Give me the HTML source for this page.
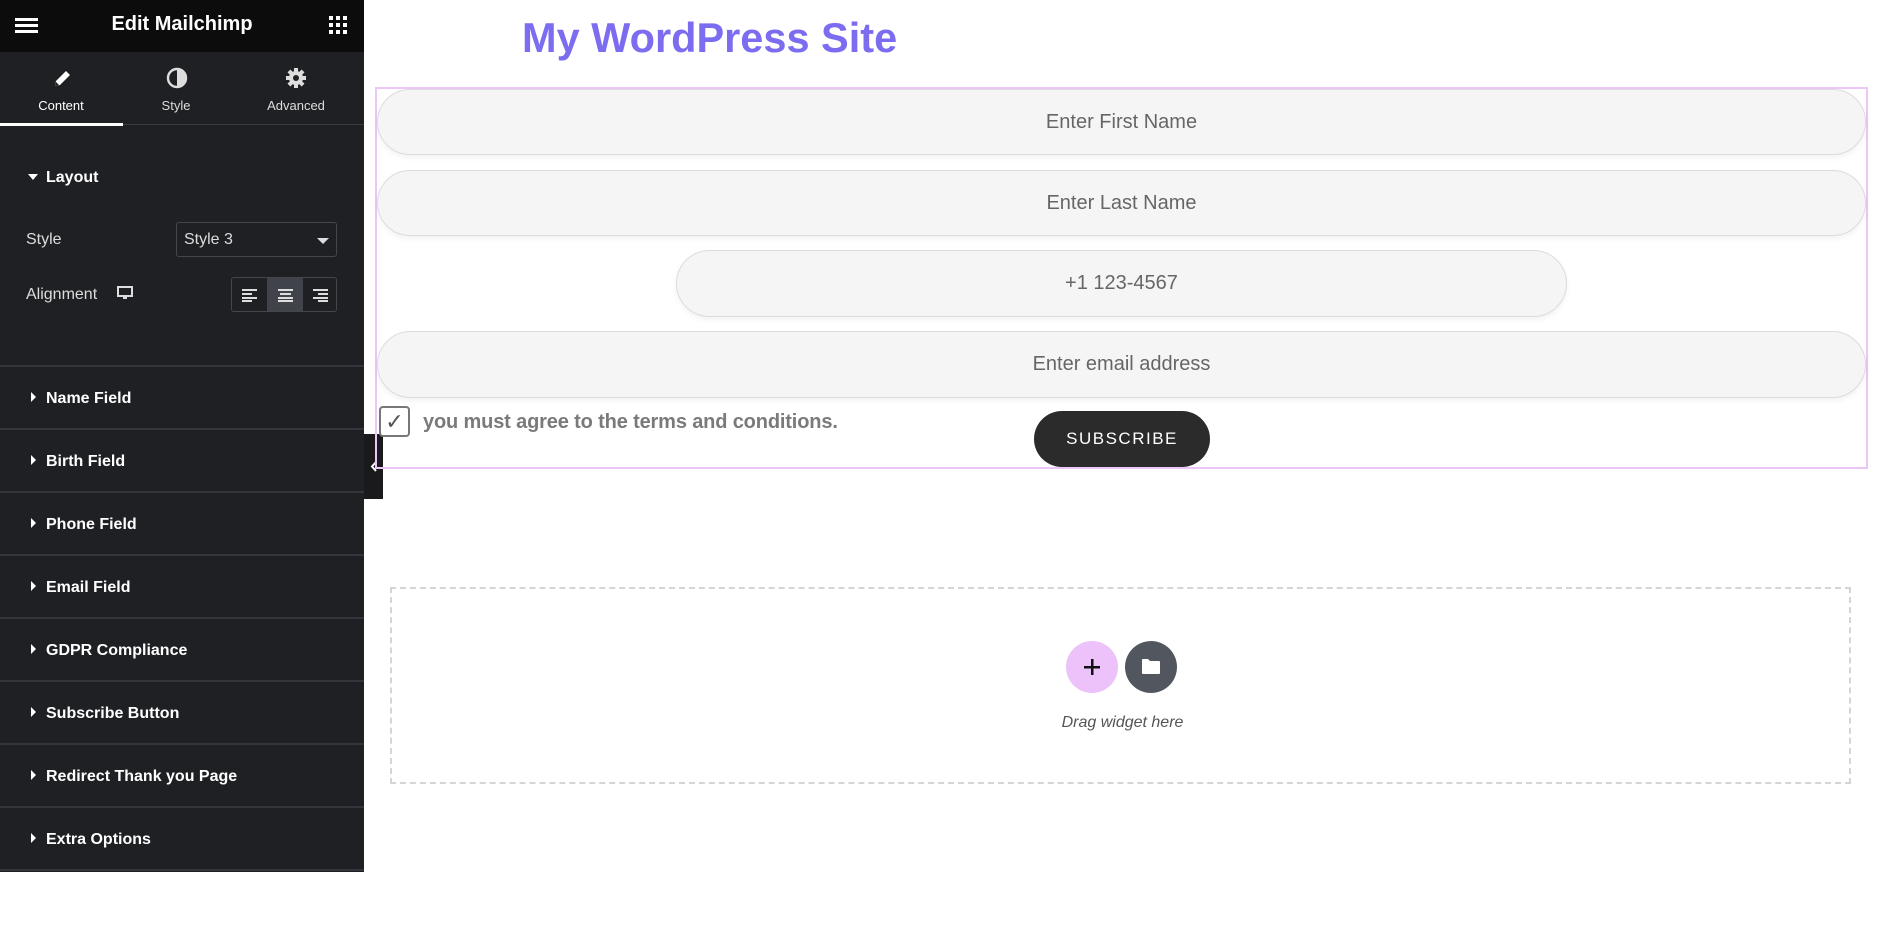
<!DOCTYPE html>
<html><head><meta charset="utf-8"><style>
*{box-sizing:border-box;margin:0;padding:0}
body{width:1885px;height:872px;overflow:hidden;background:#fff;font-family:"Liberation Sans",Arial,sans-serif;position:relative}
.side{position:absolute;left:0;top:0;width:364px;height:872px;background:#1f2024;color:#fff}
.hdr{height:52px;background:#0c0c0d;position:relative}
.hdr .t{position:absolute;left:0;right:0;top:13px;text-align:center;font-weight:bold;font-size:20px}
.tabs{position:absolute;top:52px;left:0;width:364px;height:73px;border-bottom:1px solid #3a3b3f}
.tab{position:absolute;top:0;width:122px;height:73px;text-align:center;font-size:13px;color:#ddd}
.tab .lbl{position:absolute;top:46px;left:0;right:0}
.abs{position:absolute}
.sec{position:absolute;left:0;width:364px;height:63px;border-top:2px solid #34353a}
.sec span{position:absolute;left:46px;top:23px;font-weight:bold;font-size:16px}
.sec i{position:absolute;left:31px;top:25px;width:0;height:0;border-top:5px solid transparent;border-bottom:5px solid transparent;border-left:5px solid #fff}
.inp{position:absolute;background:#f5f5f5;border:1px solid #dcdcdc;border-radius:34px;text-align:center;color:#666;font-size:20px;box-shadow:0 3px 6px rgba(0,0,0,.05)}
</style></head><body>
<div class="side">
 <div class="hdr">
  <div class="abs" style="left:15px;top:18px;width:23px;height:3px;background:#fff;box-shadow:0 6px 0 #fff,0 12px 0 #fff"></div>
  <div class="t">Edit Mailchimp</div>
  <svg class="abs" style="left:329px;top:16px" width="18" height="18" viewBox="0 0 18 18" fill="#fff"><rect x="0" y="0" width="4" height="4"/><rect x="7" y="0" width="4" height="4"/><rect x="14" y="0" width="4" height="4"/><rect x="0" y="7" width="4" height="4"/><rect x="7" y="7" width="4" height="4"/><rect x="14" y="7" width="4" height="4"/><rect x="0" y="14" width="4" height="4"/><rect x="7" y="14" width="4" height="4"/><rect x="14" y="14" width="4" height="4"/></svg>
 </div>
 <div class="tabs">
  <div class="tab" style="left:0;color:#fff"><svg class="abs" style="left:52px;top:17px" width="20" height="20" viewBox="0 0 20 20"><path d="M3 17 L4 12 L14 2 L18 6 L8 16 Z" fill="#fff"/><path d="M3 17 L4 13 L7 16Z" fill="#1f2024"/></svg><div class="lbl">Content</div><div class="abs" style="left:0;bottom:-1px;width:123px;height:3px;background:#fff"></div></div>
  <div class="tab" style="left:115px"><svg class="abs" style="left:51px;top:15px" width="22" height="22" viewBox="0 0 22 22"><circle cx="11" cy="11" r="9" fill="none" stroke="#ddd" stroke-width="2.4"/><path d="M11 2 A9 9 0 0 1 11 20Z" fill="#ddd"/></svg><div class="lbl">Style</div></div>
  <div class="tab" style="left:235px"><svg class="abs" style="left:50px;top:15px" width="22" height="22" viewBox="0 0 22 22"><g fill="#ddd"><circle cx="11" cy="11" r="7"/><rect x="9" y="1" width="4" height="20"/><rect x="1" y="9" width="20" height="4"/><rect x="9" y="1" width="4" height="20" transform="rotate(45 11 11)"/><rect x="9" y="1" width="4" height="20" transform="rotate(-45 11 11)"/></g><circle cx="11" cy="11" r="3" fill="#1f2024"/></svg><div class="lbl">Advanced</div></div>
 </div>
 <div class="abs" style="left:28px;top:174px;width:0;height:0;border-left:5px solid transparent;border-right:5px solid transparent;border-top:6px solid #fff"></div>
 <div class="abs" style="left:46px;top:169px;font-weight:bold;font-size:16px">Layout</div>
 <div class="abs" style="left:26px;top:231px;font-size:16px;color:#ddd">Style</div>
 <div class="abs" style="left:176px;top:222px;width:161px;height:35px;border:1px solid #45464b;border-radius:3px;background:#1f2024"><span class="abs" style="left:7px;top:8px;font-size:16px;color:#ddd">Style 3</span><div class="abs" style="right:7px;top:15px;border-left:6px solid transparent;border-right:6px solid transparent;border-top:6px solid #ddd"></div></div>
 <div class="abs" style="left:26px;top:286px;font-size:16px;color:#ddd">Alignment</div>
 <svg class="abs" style="left:117px;top:286px" width="16" height="14" viewBox="0 0 16 14"><rect x="1" y="1" width="14" height="9" fill="none" stroke="#ddd" stroke-width="2"/><rect x="6" y="11" width="4" height="2" fill="#ddd"/></svg>
 <div class="abs" style="left:231px;top:277px;width:106px;height:35px;border:1px solid #45464b;border-radius:3px;overflow:hidden">
  <div class="abs" style="left:35px;top:0;width:36px;height:35px;background:#404349"></div>
  <svg class="abs" style="left:10px;top:11px" width="86" height="13" viewBox="0 0 86 13" fill="#ddd"><rect x="0" y="0" width="15" height="2"/><rect x="0" y="4" width="10" height="2"/><rect x="0" y="8" width="15" height="2"/><rect x="0" y="11" width="10" height="2"/><rect x="36" y="0" width="15" height="2"/><rect x="38" y="4" width="11" height="2"/><rect x="36" y="8" width="15" height="2"/><rect x="36" y="11" width="15" height="2"/><rect x="71" y="0" width="15" height="2"/><rect x="76" y="4" width="10" height="2"/><rect x="71" y="8" width="15" height="2"/><rect x="76" y="11" width="10" height="2"/></svg>
 </div>
 <div class="sec" style="top:365px"><i></i><span>Name Field</span></div>
 <div class="sec" style="top:428px"><i></i><span>Birth Field</span></div>
 <div class="sec" style="top:491px"><i></i><span>Phone Field</span></div>
 <div class="sec" style="top:554px"><i></i><span>Email Field</span></div>
 <div class="sec" style="top:617px"><i></i><span>GDPR Compliance</span></div>
 <div class="sec" style="top:680px"><i></i><span>Subscribe Button</span></div>
 <div class="sec" style="top:743px"><i></i><span>Redirect Thank you Page</span></div>
 <div class="sec" style="top:806px"><i></i><span>Extra Options</span></div>
 <div class="sec" style="top:869px"></div>
</div>
<div class="abs" style="left:364px;top:434px;width:19px;height:65px;background:#1a1a1c"></div>
<svg class="abs" style="left:370px;top:461px" width="7" height="11" viewBox="0 0 7 11"><path d="M6 1 L2 5.5 L6 10" fill="none" stroke="#fff" stroke-width="2"/></svg>

<div class="abs" style="left:522px;top:14px;font-size:41.5px;font-weight:bold;color:#7b6cf0">My WordPress Site</div>
<div class="abs" style="left:375px;top:87px;width:1493px;height:382px;border:2px solid #ecc6f5"></div>
<div class="inp" style="left:377px;top:89px;width:1489px;height:66px;line-height:64px">Enter First Name</div>
<div class="inp" style="left:377px;top:170px;width:1489px;height:66px;line-height:64px">Enter Last Name</div>
<div class="inp" style="left:676px;top:250px;width:891px;height:67px;line-height:65px">+1 123-4567</div>
<div class="inp" style="left:377px;top:331px;width:1489px;height:67px;line-height:65px">Enter email address</div>
<div class="abs" style="left:379px;top:406px;width:31px;height:31px;border:2px solid #777;border-radius:4px;background:#fff;text-align:center;font-size:22px;line-height:27px;color:#555">✓</div>
<div class="abs" style="left:423px;top:411px;font-size:20px;font-weight:bold;color:#7a7a7a;letter-spacing:-0.15px">you must agree to the terms and conditions.</div>
<div class="abs" style="left:1034px;top:411px;width:176px;height:56px;border-radius:28px;background:#2b2b2b;color:#fff;text-align:center;line-height:56px;font-size:17px;letter-spacing:1.5px">SUBSCRIBE</div>

<div class="abs" style="left:390px;top:587px;width:1461px;height:197px;border:2px dashed #d5d5d5"></div>
<div class="abs" style="left:1066px;top:641px;width:52px;height:52px;border-radius:50%;background:#edc1fa"><svg class="abs" style="left:17px;top:17px" width="18" height="18"><rect x="8" y="1" width="2.5" height="16" fill="#111"/><rect x="1" y="8" width="16" height="2.5" fill="#111"/></svg></div>
<div class="abs" style="left:1125px;top:641px;width:52px;height:52px;border-radius:50%;background:#52575f"><svg class="abs" style="left:16px;top:17px" width="20" height="17" viewBox="0 0 20 17"><path d="M1 2 Q1 1 2 1 L7 1 L9 3 L18 3 Q19 3 19 4 L19 15 Q19 16 18 16 L2 16 Q1 16 1 15Z" fill="#fff"/></svg></div>
<div class="abs" style="left:995px;top:714px;width:255px;text-align:center;font-style:italic;font-size:16px;color:#555">Drag widget here</div>
</body></html>
